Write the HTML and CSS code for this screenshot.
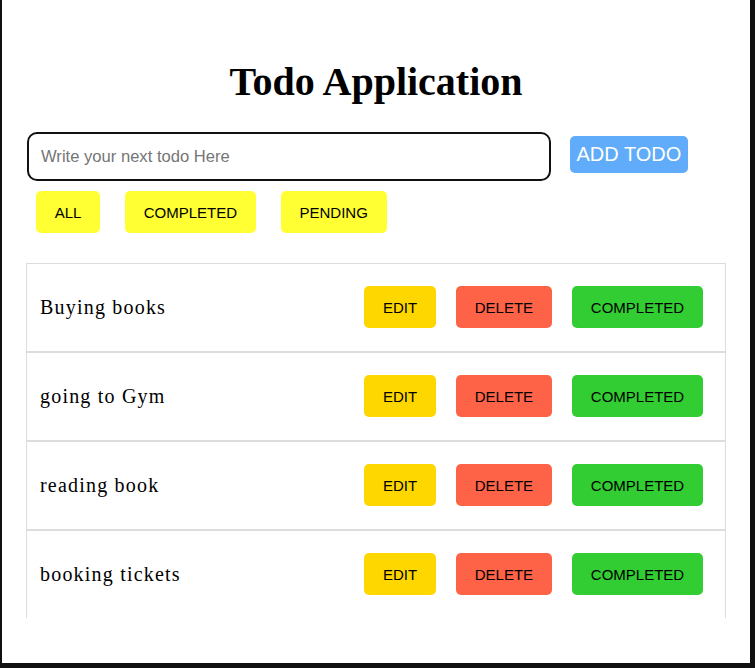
FILE: index.html
```html
<!DOCTYPE html>
<html lang="en">
<head>
<meta charset="utf-8">
<title>Todo Application</title>
<link rel="stylesheet" href="styles.css">
</head>
<body>
<div class="page">
  <div class="app">
    <h1 class="title">Todo Application</h1>
    <div class="add-row">
      <input class="todo-input" type="text" placeholder="Write your next todo Here">
      <button class="add-btn">ADD TODO</button>
    </div>
    <div class="filters">
      <button class="filter-btn">ALL</button>
      <button class="filter-btn">COMPLETED</button>
      <button class="filter-btn">PENDING</button>
    </div>
    <ul class="list">
      <li class="item">
        <span class="item-text">Buying books</span>
        <div class="actions">
          <button class="btn edit">EDIT</button>
          <button class="btn delete">DELETE</button>
          <button class="btn complete">COMPLETED</button>
        </div>
      </li>
      <li class="item">
        <span class="item-text">going to Gym</span>
        <div class="actions">
          <button class="btn edit">EDIT</button>
          <button class="btn delete">DELETE</button>
          <button class="btn complete">COMPLETED</button>
        </div>
      </li>
      <li class="item">
        <span class="item-text">reading book</span>
        <div class="actions">
          <button class="btn edit">EDIT</button>
          <button class="btn delete">DELETE</button>
          <button class="btn complete">COMPLETED</button>
        </div>
      </li>
      <li class="item">
        <span class="item-text">booking tickets</span>
        <div class="actions">
          <button class="btn edit">EDIT</button>
          <button class="btn delete">DELETE</button>
          <button class="btn complete">COMPLETED</button>
        </div>
      </li>
    </ul>
  </div>
</div>
</body>
</html>
```
FILE: styles.css
```css
html, body {
  margin: 0;
  padding: 0;
}
body {
  background: #111111;
  width: 755px;
  height: 668px;
  overflow: hidden;
}
.page {
  margin-left: 2px;
  width: 748px;
  height: 663px;
  background: #ffffff;
  overflow: hidden;
}
.app {
  width: 700px;
  margin: 0 auto;
  padding-top: 59px;
}
.title {
  margin: 0;
  font-family: "Liberation Serif", "Times New Roman", serif;
  font-weight: bold;
  font-size: 40px;
  line-height: 46px;
  text-align: center;
  color: #000;
}
.add-row {
  display: flex;
  align-items: flex-start;
  gap: 19px;
  margin-top: 27px;
}
.todo-input {
  box-sizing: border-box;
  width: 524px;
  height: 49px;
  margin: 0 0 0 1px;
  border: 2px solid #111;
  border-radius: 10px;
  padding: 0 12px;
  font-family: "Liberation Sans", Arial, sans-serif;
  font-size: 16.6px;
  outline: none;
}
.todo-input::placeholder {
  color: #757575;
}
.add-btn {
  margin-top: 4px;
  height: 37px;
  padding: 0 6.5px;
  border: none;
  border-radius: 5px;
  background: #60acfa;
  color: #ffffff;
  font-family: "Liberation Sans", Arial, sans-serif;
  font-size: 20px;
}
.filters {
  display: flex;
  gap: 25px;
  margin-top: 10px;
  margin-left: 10px;
}
.filter-btn {
  height: 42px;
  padding: 0 18.7px;
  border: none;
  border-radius: 5px;
  background: #ffff33;
  color: #000;
  font-family: "Liberation Sans", Arial, sans-serif;
  font-size: 15px;
}
.list {
  list-style: none;
  margin: 30px 0 0 0;
  padding: 0;
  height: 355px;
  overflow: hidden;
}
.item {
  display: flex;
  align-items: center;
  justify-content: space-between;
  box-sizing: border-box;
  height: 89px;
  border: 1px solid #dddddd;
  padding: 0 22px 1px 13px;
}
.item-text {
  font-family: "Liberation Serif", "Times New Roman", serif;
  font-size: 20px;
  letter-spacing: 1.2px;
  color: #000;
}
.actions {
  display: flex;
  gap: 20px;
}
.btn {
  height: 42px;
  padding: 0 18.85px;
  border: none;
  border-radius: 5px;
  color: #000;
  font-family: "Liberation Sans", Arial, sans-serif;
  font-size: 15px;
}
.edit {
  background: #ffd700;
}
.delete {
  background: #ff6347;
}
.complete {
  background: #32cd32;
}
```
